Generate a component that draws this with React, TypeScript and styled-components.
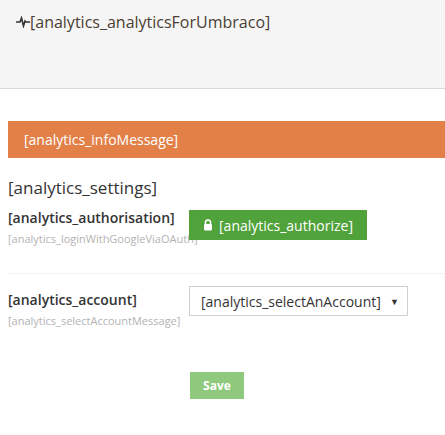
import React from "react";
import styled, { createGlobalStyle } from "styled-components";

const Global = createGlobalStyle`
  html, body { margin: 0; padding: 0; background: #fff; }
  body { font-family: "Open Sans", sans-serif; color: #343434; }
`;

const Header = styled.div`
  height: 89px;
  background: #f6f5f5;
  border-bottom: 1px solid #d9d9d9;
  padding: 11px 0 0 16px;
  box-sizing: border-box;
`;
const Title = styled.div`
  display: flex;
  align-items: center;
  font-size: 16px;
  color: #4a4033;
  line-height: 22px;
`;
const Body = styled.div`
  padding: 32px 0 0 8px;
`;
const Info = styled.div`
  background: #e28048;
  color: #fff;
  font-size: 14px;
  height: 37px;
  display: flex;
  align-items: center;
  padding-left: 16px;
`;
const H = styled.div`
  font-size: 17px;
  margin-top: 18px;
  line-height: 24px;
`;
const Row = styled.div<{ $top: number }>`
  display: flex;
  align-items: flex-start;
  margin-top: ${(p) => p.$top}px;
`;
const LabelCol = styled.div`
  width: 181px;
  flex: none;
  white-space: nowrap;
  overflow: visible;
`;
const Label = styled.div`
  font-size: 14px;
  font-weight: 600;
  line-height: 19px;
`;
const Desc = styled.div`
  font-size: 11px;
  color: #b3b3b3;
  line-height: 15px;
  margin-top: 4px;
`;
const AuthBtn = styled.button`
  position: relative;
  z-index: 1;
  background: #50a23a;
  border: none;
  color: #fff;
  font-family: "Open Sans", sans-serif;
  font-size: 14px;
  height: 30px;
  width: 178px;
  display: flex;
  align-items: center;
  justify-content: center;
  gap: 6px;
  margin-top: 2px;
`;
const Sep = styled.div`
  border-top: 1px dotted #e8e8e8;
  margin: 27px 0 0 0;
`;
const Select = styled.div`
  width: 219px;
  height: 30px;
  box-sizing: border-box;
  border: 1px solid #cfcfcf;
  font-size: 14px;
  display: flex;
  align-items: center;
  justify-content: space-between;
  padding: 0 8px 0 11px;
  margin-top: -4px;
`;
const Save = styled.button`
  display: block;
  margin: 44px 0 0 182px;
  width: 54px;
  height: 27px;
  background: #8fc97e;
  border: none;
  color: #fff;
  font-family: "Open Sans", sans-serif;
  font-weight: 700;
  font-size: 12px;
`;

export default function App() {
  return (
    <>
      <Global />
      <Header>
        <Title>
          <svg width="14" height="12" viewBox="0 0 14 12">
            <path d="M0 6h4l1.5-4 2 8 1.5-5 1 1h4" fill="none" stroke="#333" strokeWidth="1.6" />
          </svg>
          [analytics_analyticsForUmbraco]
        </Title>
      </Header>
      <Body>
        <Info>[analytics_infoMessage]</Info>
        <H>[analytics_settings]</H>
        <Row $top={8}>
          <LabelCol>
            <Label>[analytics_authorisation]</Label>
            <Desc>[analytics_loginWithGoogleViaOAuth]</Desc>
          </LabelCol>
          <AuthBtn>
            <svg width="10" height="12" viewBox="0 0 10 12">
              <path d="M2.5 5V3.5a2.5 2.5 0 0 1 5 0V5" fill="none" stroke="#fff" strokeWidth="1.6" />
              <rect x="1" y="5" width="8" height="6.5" rx="1" fill="#fff" />
            </svg>
            [analytics_authorize]
          </AuthBtn>
        </Row>
        <Sep />
        <Row $top={16}>
          <LabelCol>
            <Label>[analytics_account]</Label>
            <Desc>[analytics_selectAccountMessage]</Desc>
          </LabelCol>
          <Select>
            <span>[analytics_selectAnAccount]</span>
            <span style={{ fontSize: 9 }}>▼</span>
          </Select>
        </Row>
        <Save>Save</Save>
      </Body>
    </>
  );
}
